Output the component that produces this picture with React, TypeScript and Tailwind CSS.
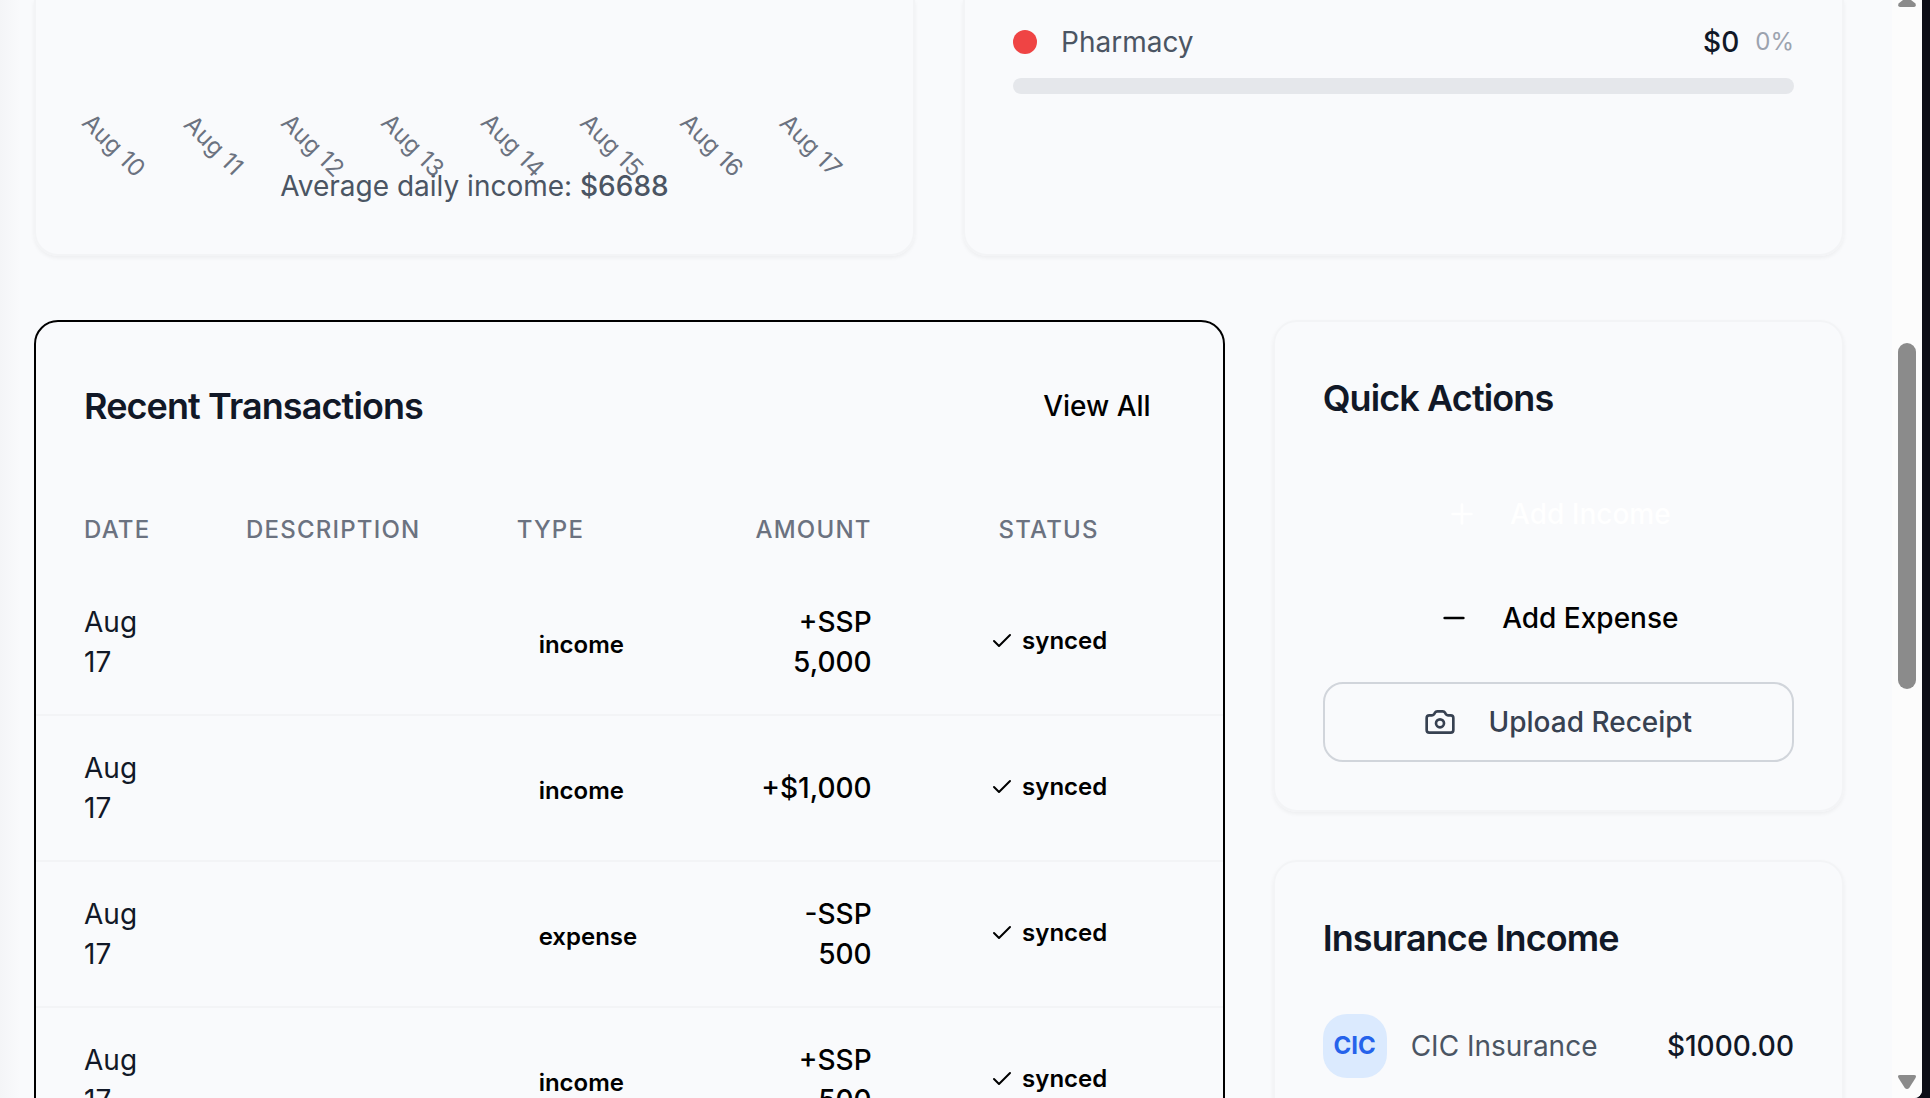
import React from "react";
import { Camera, Check, Minus, Plus } from "lucide-react";

const days = ["Aug 10", "Aug 11", "Aug 12", "Aug 13", "Aug 14", "Aug 15", "Aug 16", "Aug 17"];

const transactions = [
  { date: "Aug 17", description: "", type: "income", amount: "+SSP 5,000", status: "synced" },
  { date: "Aug 17", description: "", type: "income", amount: "+$1,000", status: "synced" },
  { date: "Aug 17", description: "", type: "expense", amount: "-SSP 500", status: "synced" },
  { date: "Aug 17", description: "", type: "income", amount: "+SSP 500", status: "synced" },
];

const cardClass = "border-2 border-[#f3f4f6] shadow-[0_2px_4px_rgba(0,0,0,0.05)]";
const titleClass = "text-[36px] leading-[56px] font-semibold tracking-tight text-[#111827]";
const thClass = "px-12 py-6 text-2xl leading-8 font-medium tracking-wider text-[#6b7280] uppercase";

function IncomeTrend() {
  return (
    <section className={`${cardClass} rounded-b-3xl border-t-0 px-12 pt-[100px] pb-12`}>
      <div className="flex gap-4">
        {days.map((day) => (
          <div
            key={day}
            className="flex-1 origin-left rotate-45 text-center text-2xl leading-8 whitespace-nowrap text-[#6b7280]"
          >
            {day}
          </div>
        ))}
      </div>
      <p className="mt-[34px] text-center text-[28px] leading-10 text-[#4b5563]">
        Average daily income: <span className="font-medium">$6688</span>
      </p>
    </section>
  );
}

function IncomeSources() {
  return (
    <section className={`${cardClass} rounded-b-3xl border-t-0 px-12 pt-[22px] pb-12`}>
      <div className="flex items-center justify-between">
        <div className="flex items-center gap-6">
          <span className="size-6 rounded-full bg-[#ef4444]" />
          <span className="text-[28px] leading-10 text-[#4b5563]">Pharmacy</span>
        </div>
        <div className="flex items-center gap-4">
          <span className="text-[28px] leading-10 font-medium text-[#111827]">$0</span>
          <span className="text-2xl leading-8 text-[#9ca3af]">0%</span>
        </div>
      </div>
      <div className="mt-4 h-4 rounded-full bg-[#e5e7eb]" />
    </section>
  );
}

function RecentTransactions() {
  return (
    <section className="rounded-3xl border-2 border-black lg:col-span-2">
      <header className="flex items-center justify-between p-12">
        <h2 className={titleClass}>Recent Transactions</h2>
        <button type="button" className="px-6 py-4 text-[28px] leading-10 font-medium text-black">
          View All
        </button>
      </header>
      <table className="w-full table-fixed text-[32px] leading-[48px]">
        <colgroup>
          <col className="w-[162px]" />
          <col />
          <col className="w-[236px]" />
          <col className="w-[215px]" />
          <col className="w-[258px]" />
          <col className="w-[45px]" />
        </colgroup>
        <thead>
          <tr>
            <th className={`${thClass} text-left`}>Date</th>
            <th className={`${thClass} text-left`}>Description</th>
            <th className={`${thClass} text-left`}>Type</th>
            <th className={`${thClass} text-right`}>Amount</th>
            <th className={`${thClass} text-center`}>Status</th>
            <td />
          </tr>
        </thead>
        <tbody>
          {transactions.map((t, i) => (
            <tr key={i} className="border-b-2 border-[#f3f4f6]">
              <td className="px-12 py-8 text-[28px] leading-10 text-[#111827]">{t.date}</td>
              <td className="px-12 py-8 text-[28px] leading-10 text-[#111827]">{t.description}</td>
              <td className="px-12 py-4">
                <span className="inline-flex items-center px-[22px] py-1 text-2xl leading-8 font-semibold text-black">
                  {t.type}
                </span>
              </td>
              <td className="px-12 py-8 text-right text-[28px] leading-10 font-medium text-black">{t.amount}</td>
              <td className="px-12 py-4 text-center">
                <span className="inline-flex items-center gap-2 px-5 py-1 text-2xl leading-8 font-semibold text-black">
                  <Check className="size-6" aria-hidden="true" />
                  {t.status}
                </span>
              </td>
              <td />
            </tr>
          ))}
        </tbody>
      </table>
    </section>
  );
}

function QuickActions() {
  const base = "flex h-20 items-center justify-center gap-8 rounded-[20px] text-[28px] leading-10 font-medium";
  return (
    <section className={`${cardClass} rounded-3xl p-12`}>
      <h2 className={titleClass}>Quick Actions</h2>
      <div className="mt-12 flex flex-col gap-6">
        <button type="button" className={`${base} text-white`}>
          <Plus className="size-8" aria-hidden="true" />
          Add Income
        </button>
        <button type="button" className={`${base} text-black`}>
          <Minus className="size-8" aria-hidden="true" />
          Add Expense
        </button>
        <button type="button" className={`${base} border-2 border-[#d1d5db] text-[#374151]`}>
          <Camera className="size-8" aria-hidden="true" />
          Upload Receipt
        </button>
      </div>
    </section>
  );
}

function InsuranceIncome() {
  return (
    <section className={`${cardClass} rounded-3xl p-12`}>
      <h2 className={titleClass}>Insurance Income</h2>
      <div className="mt-12 flex items-center justify-between">
        <div className="flex items-center gap-6">
          <span className="flex size-16 items-center justify-center rounded-3xl bg-[#dbeafe] text-2xl leading-8 font-bold text-[#2563eb]">
            CIC
          </span>
          <span className="text-[28px] leading-10 text-[#4b5563]">CIC Insurance</span>
        </div>
        <span className="text-[28px] leading-10 font-medium text-[#111827]">$1000.00</span>
      </div>
    </section>
  );
}

function ScrollTrack() {
  return (
    <div className="flex w-[30px] shrink-0 flex-col items-center bg-[#fcfcfc]" aria-hidden="true">
      <svg className="h-[7px] w-[18px] shrink-0" viewBox="0 0 18 7" fill="#8b8b8b">
        <path d="M5 0h8l4.500 3.500Q18.500 7 16 7H2Q-.5 7 .5 3.500z" />
      </svg>
      <div className="mt-[336px] h-[346px] w-[18px] shrink-0 rounded-full bg-[#8b8b8b]" />
      <svg className="mt-auto mb-[9px] h-[14px] w-[18px] shrink-0" viewBox="0 0 18 14" fill="#8b8b8b">
        <path d="M2 0h14q3 0 1.500 3l-6 9.500Q9 15.500 6.500 12.500L.5 3Q-1 0 2 0z" />
      </svg>
    </div>
  );
}

export default function App() {
  return (
    <div className="h-screen overflow-hidden bg-[#0d0e17] pr-2 font-['Inter',sans-serif]">
      <div className="flex h-full overflow-hidden rounded-br-lg bg-[#f9fafc]">
        <div className="w-5 shrink-0 bg-linear-to-r from-[#f4f5f7] to-[#f9fafc]" />
        <main className="flex min-w-0 flex-1 flex-col gap-16 pr-12 pl-[14px]">
          <div className="grid gap-12 lg:grid-cols-2">
            <IncomeTrend />
            <IncomeSources />
          </div>
          <div className="grid gap-12 lg:grid-cols-3">
            <RecentTransactions />
            <div className="flex flex-col gap-12">
              <QuickActions />
              <InsuranceIncome />
            </div>
          </div>
        </main>
        <ScrollTrack />
      </div>
    </div>
  );
}
